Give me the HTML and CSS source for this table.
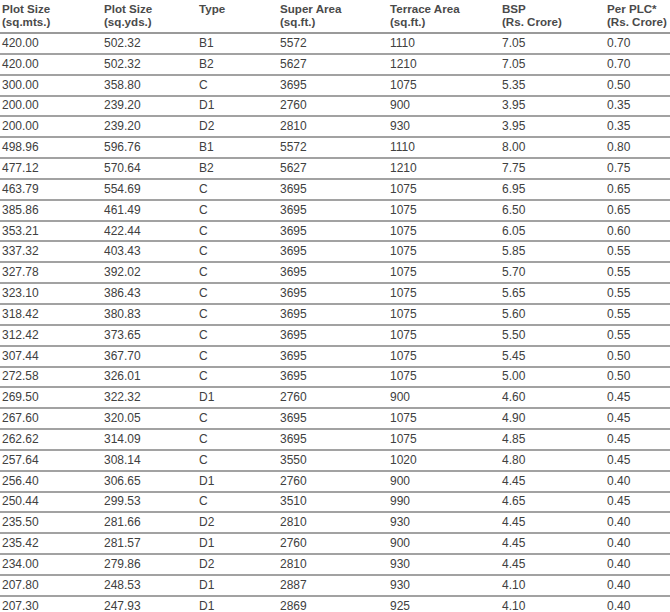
FILE: index.html
```html
<!DOCTYPE html>
<html>
<head>
<meta charset="utf-8">
<link rel="stylesheet" href="styles.css">
</head>
<body>
<table class="price-table">
<colgroup>
<col class="c1"><col class="c2"><col class="c3"><col class="c4"><col class="c5"><col class="c6"><col class="c7">
</colgroup>
<thead>
<tr><th>Plot Size<br>(sq.mts.)</th><th>Plot Size<br>(sq.yds.)</th><th>Type</th><th>Super Area<br>(sq.ft.)</th><th>Terrace Area<br>(sq.ft.)</th><th>BSP<br>(Rs. Crore)</th><th>Per PLC*<br>(Rs. Crore)</th></tr>
</thead>
<tbody>
<tr><td>420.00</td><td>502.32</td><td>B1</td><td>5572</td><td>1110</td><td>7.05</td><td>0.70</td></tr>
<tr><td>420.00</td><td>502.32</td><td>B2</td><td>5627</td><td>1210</td><td>7.05</td><td>0.70</td></tr>
<tr><td>300.00</td><td>358.80</td><td>C</td><td>3695</td><td>1075</td><td>5.35</td><td>0.50</td></tr>
<tr><td>200.00</td><td>239.20</td><td>D1</td><td>2760</td><td>900</td><td>3.95</td><td>0.35</td></tr>
<tr><td>200.00</td><td>239.20</td><td>D2</td><td>2810</td><td>930</td><td>3.95</td><td>0.35</td></tr>
<tr><td>498.96</td><td>596.76</td><td>B1</td><td>5572</td><td>1110</td><td>8.00</td><td>0.80</td></tr>
<tr><td>477.12</td><td>570.64</td><td>B2</td><td>5627</td><td>1210</td><td>7.75</td><td>0.75</td></tr>
<tr><td>463.79</td><td>554.69</td><td>C</td><td>3695</td><td>1075</td><td>6.95</td><td>0.65</td></tr>
<tr><td>385.86</td><td>461.49</td><td>C</td><td>3695</td><td>1075</td><td>6.50</td><td>0.65</td></tr>
<tr><td>353.21</td><td>422.44</td><td>C</td><td>3695</td><td>1075</td><td>6.05</td><td>0.60</td></tr>
<tr><td>337.32</td><td>403.43</td><td>C</td><td>3695</td><td>1075</td><td>5.85</td><td>0.55</td></tr>
<tr><td>327.78</td><td>392.02</td><td>C</td><td>3695</td><td>1075</td><td>5.70</td><td>0.55</td></tr>
<tr><td>323.10</td><td>386.43</td><td>C</td><td>3695</td><td>1075</td><td>5.65</td><td>0.55</td></tr>
<tr><td>318.42</td><td>380.83</td><td>C</td><td>3695</td><td>1075</td><td>5.60</td><td>0.55</td></tr>
<tr><td>312.42</td><td>373.65</td><td>C</td><td>3695</td><td>1075</td><td>5.50</td><td>0.55</td></tr>
<tr><td>307.44</td><td>367.70</td><td>C</td><td>3695</td><td>1075</td><td>5.45</td><td>0.50</td></tr>
<tr><td>272.58</td><td>326.01</td><td>C</td><td>3695</td><td>1075</td><td>5.00</td><td>0.50</td></tr>
<tr><td>269.50</td><td>322.32</td><td>D1</td><td>2760</td><td>900</td><td>4.60</td><td>0.45</td></tr>
<tr><td>267.60</td><td>320.05</td><td>C</td><td>3695</td><td>1075</td><td>4.90</td><td>0.45</td></tr>
<tr><td>262.62</td><td>314.09</td><td>C</td><td>3695</td><td>1075</td><td>4.85</td><td>0.45</td></tr>
<tr><td>257.64</td><td>308.14</td><td>C</td><td>3550</td><td>1020</td><td>4.80</td><td>0.45</td></tr>
<tr><td>256.40</td><td>306.65</td><td>D1</td><td>2760</td><td>900</td><td>4.45</td><td>0.40</td></tr>
<tr><td>250.44</td><td>299.53</td><td>C</td><td>3510</td><td>990</td><td>4.65</td><td>0.45</td></tr>
<tr><td>235.50</td><td>281.66</td><td>D2</td><td>2810</td><td>930</td><td>4.45</td><td>0.40</td></tr>
<tr><td>235.42</td><td>281.57</td><td>D1</td><td>2760</td><td>900</td><td>4.45</td><td>0.40</td></tr>
<tr><td>234.00</td><td>279.86</td><td>D2</td><td>2810</td><td>930</td><td>4.45</td><td>0.40</td></tr>
<tr><td>207.80</td><td>248.53</td><td>D1</td><td>2887</td><td>930</td><td>4.10</td><td>0.40</td></tr>
<tr><td>207.30</td><td>247.93</td><td>D1</td><td>2869</td><td>925</td><td>4.10</td><td>0.40</td></tr>
</tbody>
</table>
</body>
</html>
```

FILE: styles.css
```css
html, body {
  margin: 0;
  padding: 0;
  background: #ffffff;
}
body {
  font-family: "Liberation Sans", Arial, sans-serif;
  color: #404040;
  overflow: hidden;
}
.price-table {
  border-collapse: collapse;
  table-layout: fixed;
  width: 670px;
}
.c1 { width: 102px; }
.c2 { width: 95px; }
.c3 { width: 81px; }
.c4 { width: 110px; }
.c5 { width: 112px; }
.c6 { width: 105px; }
.c7 { width: 65px; }
.price-table th {
  text-align: left;
  vertical-align: top;
  font-size: 11.6px;
  font-weight: bold;
  line-height: 13px;
  color: #4a4a4a;
  padding: 2px 0 3px 2px;
  height: 27px;
  border-bottom: 2px solid #9a9a9a;
  white-space: nowrap;
}
.price-table td {
  font-size: 12px;
  line-height: 13px;
  padding: 0 0 0 2px;
  height: 18.85px;
  border-bottom: 2px solid #a2a2a2;
  white-space: nowrap;
  vertical-align: middle;
}
.price-table tbody tr:last-child td {
  border-bottom: none;
}
```
